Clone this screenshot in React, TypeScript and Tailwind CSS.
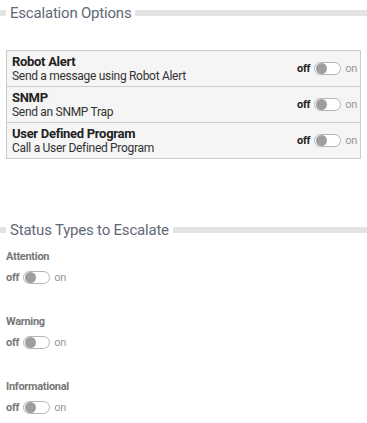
const options = [
  { title: "Robot Alert", desc: "Send a message using Robot Alert" },
  { title: "SNMP", desc: "Send an SNMP Trap" },
  { title: "User Defined Program", desc: "Call a User Defined Program" },
];

const statuses = ["Attention", "Warning", "Informational"];

function SectionHeading({ label }: { label: string }) {
  return (
    <div className="flex items-center h-[24px]">
      <span className="w-[6px] h-[6px] bg-[#e3e3e3] shrink-0" />
      <span className="px-[4px] text-[15px] leading-none tracking-[-0.2px] text-[#5f6877]">{label}</span>
      <span className="flex-1 h-[6px] bg-[#e3e3e3]" />
    </div>
  );
}

function Toggle({ muted }: { muted?: boolean }) {
  return (
    <div className="flex items-center gap-[4px] text-[11px] leading-none">
      <span className={muted ? "font-bold text-[#777]" : "font-bold text-[#222]"}>off</span>
      <span className="w-[27px] h-[13px] rounded-full border border-[#b5b5b5] bg-white flex items-center px-[1px]">
        <span className="w-[11px] h-[11px] rounded-full bg-[#9e9e9e]" />
      </span>
      <span className="text-[#999]">on</span>
    </div>
  );
}

export default function App() {
  return (
    <div className="w-[367px] h-[423px] bg-white font-['Roboto',sans-serif] tracking-[-0.3px] overflow-hidden">
      <div className="pt-[1px]">
        <SectionHeading label="Escalation Options" />
      </div>

      <div className="mx-[6px] mt-[25px] border border-[#cccccc] bg-[#f5f5f5]">
        {options.map((o, i) => (
          <div
            key={o.title}
            className={
              i === 0
                ? "flex items-center justify-between h-[35px] pl-[5px] pr-[3px]"
                : "flex items-center justify-between h-[36px] pl-[5px] pr-[3px] border-t border-[#cccccc]"
            }
          >
            <div className="flex flex-col">
              <span className="text-[13px] leading-[14px] font-bold text-[#222]">{o.title}</span>
              <span className="text-[12px] leading-[14px] text-[#333]">{o.desc}</span>
            </div>
            <Toggle />
          </div>
        ))}
      </div>

      <div className="mt-[59px]">
        <SectionHeading label="Status Types to Escalate" />
      </div>

      <div className="pl-[6px] pt-[9px] flex flex-col gap-[32px]">
        {statuses.map((s) => (
          <div key={s} className="flex flex-col gap-[8px]">
            <span className="text-[11px] leading-[12px] font-bold text-[#777]">{s}</span>
            <Toggle muted />
          </div>
        ))}
      </div>
    </div>
  );
}
